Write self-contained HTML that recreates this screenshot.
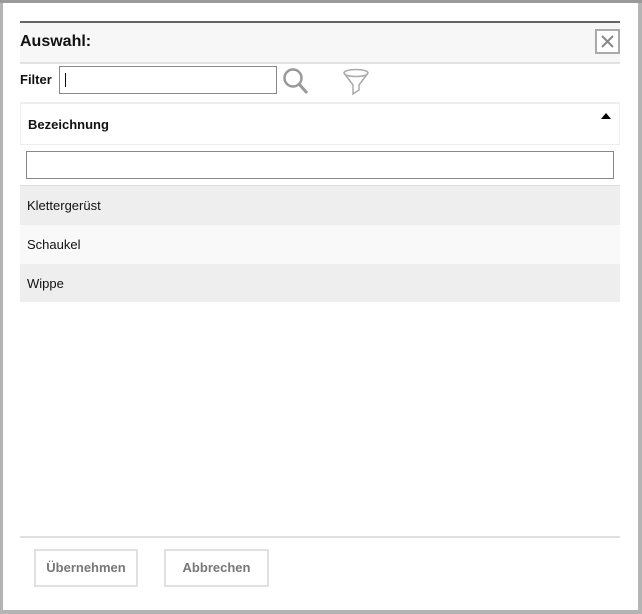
<!DOCTYPE html><html><head><style>
body{margin:0;width:642px;height:614px;background:#b4b4b4;font-family:"Liberation Sans",sans-serif;position:relative;overflow:hidden}
.d{position:absolute;left:3px;top:3px;width:635px;height:607px;background:#fff}
.a{position:absolute}
</style></head><body>
<div class="a" style="left:0;top:0;width:642px;height:3px;background:#9a9a9a"></div>
<div class="d"></div>
<div class="a" style="left:20px;top:21px;width:600px;height:2px;background:#666"></div>
<div class="a" style="left:20px;top:23px;width:600px;height:39px;background:#f7f7f7;border-bottom:2px solid #e2e2e2"></div>
<div class="a" style="left:20px;top:33px;font-weight:bold;font-size:16px;color:#111">Auswahl:</div>
<div class="a" style="left:595px;top:29px;width:21px;height:21px;border:2px solid #aaa;background:#fff"><svg width="21" height="21"><path d="M5 5L16 16M16 5L5 16" stroke="#888" stroke-width="2"/></svg></div>
<div class="a" style="left:20px;top:72px;font-weight:bold;font-size:13px;color:#111">Filter</div>
<div class="a" style="left:59px;top:66px;width:216px;height:26px;border:1px solid #888;background:#fff"><div style="position:absolute;left:5px;top:6px;width:1px;height:14px;background:#000"></div></div>
<svg class="a" style="left:282px;top:67px" width="28" height="28"><circle cx="11" cy="11" r="8.5" fill="none" stroke="#999" stroke-width="2.5"/><line x1="17" y1="17" x2="25" y2="26" stroke="#999" stroke-width="3"/></svg>
<svg class="a" style="left:342px;top:68px" width="28" height="28"><ellipse cx="14" cy="5" rx="12" ry="3.5" fill="none" stroke="#aaa" stroke-width="1.5"/><path d="M2 5 L11 17 L11 26 L17 22 L17 17 L26 5" fill="none" stroke="#aaa" stroke-width="1.5"/></svg>
<div class="a" style="left:20px;top:102px;width:600px;height:2px;background:#eee"></div>
<div class="a" style="left:20px;top:104px;width:598px;height:40px;border:1px solid #eee;border-top:none;background:#fff"></div>
<div class="a" style="left:28px;top:117px;font-weight:bold;font-size:13px;color:#111">Bezeichnung</div>
<div class="a" style="left:601px;top:113px;width:0;height:0;border-left:5px solid transparent;border-right:5px solid transparent;border-bottom:6px solid #000"></div>
<div class="a" style="left:20px;top:145px;width:600px;height:40px;background:#fff;border-bottom:1px solid #ddd"></div>
<div class="a" style="left:26px;top:151px;width:586px;height:26px;border:1px solid #888;background:#fff"></div>
<div class="a" style="left:20px;top:186px;width:600px;height:39px;background:#eee"></div>
<div class="a" style="left:20px;top:225px;width:600px;height:39px;background:#f9f9f9"></div>
<div class="a" style="left:20px;top:264px;width:600px;height:38px;background:#eee"></div>
<div class="a" style="left:27px;top:198px;font-size:13px;color:#111">Klettergerüst</div>
<div class="a" style="left:27px;top:237px;font-size:13px;color:#111">Schaukel</div>
<div class="a" style="left:27px;top:276px;font-size:13px;color:#111">Wippe</div>
<div class="a" style="left:20px;top:536px;width:600px;height:2px;background:#e0e0e0"></div>
<div class="a" style="left:34px;top:549px;width:100px;height:34px;border:2px solid #e0e0e0;font-weight:bold;font-size:13px;color:#777;text-align:center;line-height:34px">Übernehmen</div>
<div class="a" style="left:164px;top:549px;width:101px;height:34px;border:2px solid #e0e0e0;font-weight:bold;font-size:13px;color:#777;text-align:center;line-height:34px">Abbrechen</div>
</body></html>
